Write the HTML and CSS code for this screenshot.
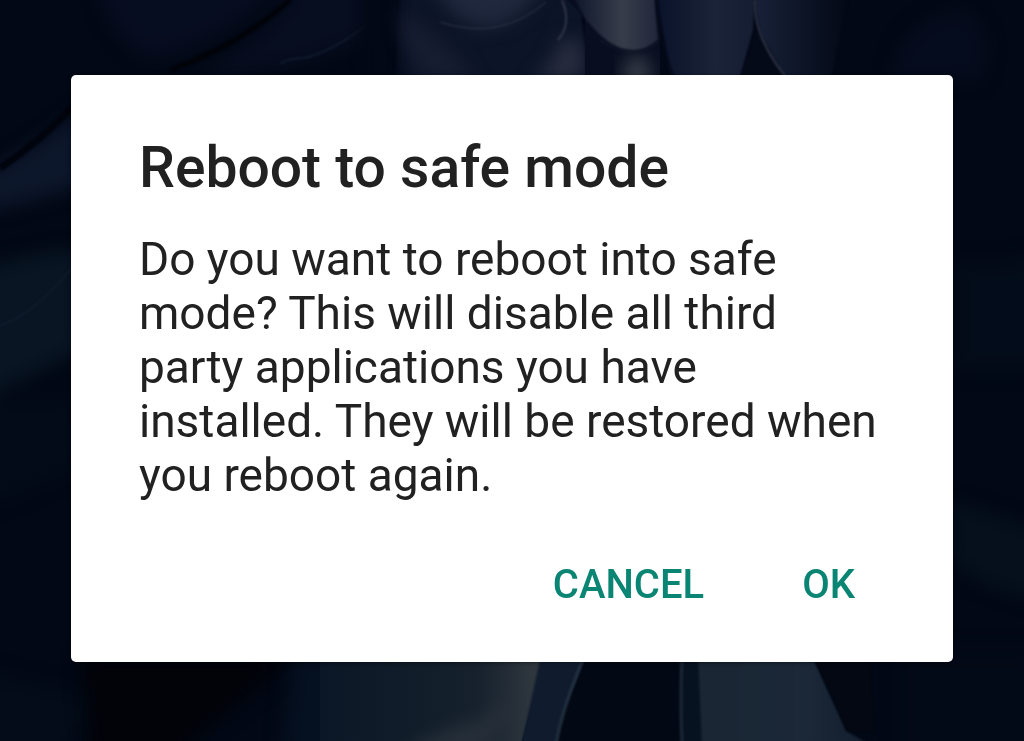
FILE: index.html
```html
<!DOCTYPE html>
<html lang="en">
  <head>
    <meta charset="UTF-8" />
    <meta name="viewport" content="width=device-width, initial-scale=1.0" />
    <title>Reboot to safe mode</title>
    <link rel="stylesheet" href="styles.css">
  </head>
  <body>
    <!-- Dimmed wallpaper -->
    <svg class="wallpaper" viewBox="0 0 1024 741" preserveAspectRatio="xMidYMid slice" aria-hidden="true">
      <defs>
        <filter id="soft" x="-30%" y="-30%" width="160%" height="160%" color-interpolation-filters="sRGB">
          <feGaussianBlur stdDeviation="9" />
        </filter>
        <filter id="fine" x="-20%" y="-20%" width="140%" height="140%" color-interpolation-filters="sRGB">
          <feGaussianBlur stdDeviation="1" />
        </filter>
        <linearGradient id="finger" x1="0" x2="1" y1="0" y2="0">
          <stop offset="0" stop-color="#0b1428" />
          <stop offset="0.6" stop-color="#383d4b" />
          <stop offset="1" stop-color="#20273a" />
        </linearGradient>
        <linearGradient id="fold" x1="0" x2="1" y1="0" y2="0">
          <stop offset="0" stop-color="#0a1229" />
          <stop offset="0.6" stop-color="#1b2338" />
          <stop offset="1" stop-color="#151d33" />
        </linearGradient>
        <linearGradient id="side" x1="0" x2="1" y1="0" y2="0">
          <stop offset="0" stop-color="#182138" />
          <stop offset="1" stop-color="#020815" />
        </linearGradient>
        <linearGradient id="smoke" x1="0" x2="1" y1="0" y2="0">
          <stop offset="0" stop-color="#0b1726" />
          <stop offset="0.7" stop-color="#16212d" />
          <stop offset="1" stop-color="#343b42" />
        </linearGradient>
        <linearGradient id="cloth" x1="0" x2="1" y1="0" y2="0">
          <stop offset="0" stop-color="#1a2633" />
          <stop offset="0.6" stop-color="#1b2838" />
          <stop offset="1" stop-color="#101c2b" />
        </linearGradient>
      </defs>
      <rect width="1024" height="741" fill="#020815" />

      <!-- left folds -->
      <g filter="url(#soft)">
        <path d="M95 -20H285Q220 48 150 58Q110 40 95 -20Z" fill="#070d20" />
        <path d="M300 -20H400L390 30L300 62L190 80Q270 40 300 -20Z" fill="#070e20" />
        <path d="M-20 175Q50 140 80 108V185Q40 200 -20 212Z" fill="#0d172b" />
        <path d="M-20 270Q40 250 80 250V350L-20 400Z" fill="#091523" />
        <path d="M-20 400H80V470L-20 510Z" fill="#030b18" />
        <path d="M-20 670L120 700L60 760H-20Z" fill="#030c18" />
      </g>
      <g filter="url(#fine)" fill="none">
        <path d="M290 0Q240 45 170 70" stroke="#010309" stroke-width="5" />
        <path d="M0 168Q40 142 75 104" stroke="#01040c" stroke-width="7" />
        <path d="M280 64Q285 59 305 58Q335 50 368 24" stroke="#101b2c" stroke-width="2" />
        <path d="M0 326Q40 310 75 264" stroke="#101c2c" stroke-width="2" />
      </g>

      <!-- top folds -->
      <path d="M400 -10H580L586 80H395Z" fill="#0c1428" filter="url(#fine)" />
      <path d="M360 -20H400V90H360Z" fill="#020815" filter="url(#soft)" />
      <g filter="url(#soft)">
        <path d="M400 10Q440 35 475 80H430Q400 50 400 10Z" fill="#171d31" />
        <path d="M430 -20H545Q520 30 480 27Q450 20 430 -20Z" fill="#1f283c" />
        <path d="M560 40H583V80H530Q555 65 560 40Z" fill="#272d3e" />
      </g>
      <path d="M567 0L585 18V80H660V0Z" fill="#080e1f" />
      <path d="M586 20Q615 54 636 52Q650 48 658 40L654 -10H570Z" fill="url(#finger)" filter="url(#fine)" />
      <ellipse cx="637" cy="76" rx="14" ry="22" fill="#353a47" filter="url(#soft)" />
      <path d="M655 -10H755L753 30L738 85H672Z" fill="url(#fold)" filter="url(#fine)" />
      <path d="M755 -10H850L830 85H790Q755 45 755 -10Z" fill="url(#side)" filter="url(#fine)" />
      <path d="M757 28L790 85H738Z" fill="#050a18" filter="url(#fine)" />
      <path d="M890 80Q900 20 960 10Q1000 30 980 80Z" fill="#050c1d" filter="url(#soft)" />
      <g fill="none" filter="url(#fine)">
        <path d="M440 22Q500 42 546 2" stroke="#30384a" stroke-width="1" />
        <path d="M562 0Q572 24 558 40" stroke="#303748" stroke-width="2" />
        <path d="M755 0Q753 35 785 76" stroke="#303748" stroke-width="2" />
        <path d="M600 40Q635 62 658 42" stroke="#0d1425" stroke-width="3" />
        <path d="M657 0Q660 45 674 80" stroke="#050a19" stroke-width="3" />
      </g>

      <!-- right side -->
      <g filter="url(#soft)">
        <path d="M955 260Q1000 270 1040 250V370H955Z" fill="#030c1a" />
        <path d="M950 500L1040 530V600Q980 590 950 560Z" fill="#05101c" />
        <path d="M900 650H1040V760H900Z" fill="#030a17" />
      </g>

      <!-- bottom folds -->
      <path d="M80 655H300L170 760H90Z" fill="#010309" filter="url(#soft)" />
      <path d="M292 655H340V760H280Z" fill="#051020" filter="url(#soft)" />
      <path d="M320 655H545L522 741H320Z" fill="url(#smoke)" />
      <path d="M512 700L480 755H400Q450 725 480 722Z" fill="#333b42" opacity="0.6" filter="url(#soft)" />
      <path d="M541 655H585L556 750H520Z" fill="#101c2e" filter="url(#fine)" />
      <path d="M590 655H680V741H556Q560 710 590 655Z" fill="#030914" />
      <path d="M682 655H705V741H682Z" fill="#071221" />
      <path d="M698 655H812L846 731L880 750H702Z" fill="url(#cloth)" filter="url(#fine)" />
      <path d="M812 655H870L875 733L848 731Z" fill="#030812" filter="url(#fine)" />
      <g fill="none" filter="url(#fine)">
        <path d="M585 655Q562 708 556 745" stroke="#233140" stroke-width="3" />
        <path d="M682 655Q680 700 682 745" stroke="#1c2938" stroke-width="3" />
      </g>
    </svg>

    <main class="screen">
      <section class="dialog" role="alertdialog" aria-labelledby="title" aria-describedby="message">
        <h1 class="title" id="title">Reboot to safe mode</h1>
        <p class="message" id="message">
          Do you want to reboot into safe mode? This will disable all third
          party applications you have installed. They will be restored when
          you reboot again.
        </p>
        <div class="actions">
          <button type="button" class="action">CANCEL</button>
          <button type="button" class="action">OK</button>
        </div>
      </section>
    </main>
  </body>
</html>
```
FILE: styles.css
```css
* {
  box-sizing: border-box;
}

body {
  margin: 0;
  background-color: #020815;
  color: #212121;
  font-family: Roboto, sans-serif;
}

.wallpaper {
  position: fixed;
  inset: 0;
  width: 100%;
  height: 100%;
}

.screen {
  position: relative;
  display: flex;
  align-items: center;
  min-height: 100vh;
  padding: 72px 71px 76px;
}

.dialog {
  width: 100%;
  padding: 61px 69px 45px 68px;
  background-color: #ffffff;
  border-radius: 5px;
  box-shadow: 0 1px 4px rgba(0, 0, 0, 0.4);
}

.title {
  margin: 0 0 32px;
  font-size: 57px;
  font-weight: 500;
  line-height: 64px;
}

.message {
  margin: 0 0 51px;
  font-size: 46px;
  line-height: 54px;
}

.actions {
  display: flex;
  justify-content: flex-end;
  gap: 40px;
}

.action {
  padding: 8px 29px;
  border: none;
  border-radius: 6px;
  background-color: transparent;
  color: #0a8573;
  font-family: inherit;
  font-size: 40px;
  font-weight: 500;
  line-height: 48px;
  cursor: pointer;
}

.action:hover {
  background-color: #e6f3f1;
}
```
